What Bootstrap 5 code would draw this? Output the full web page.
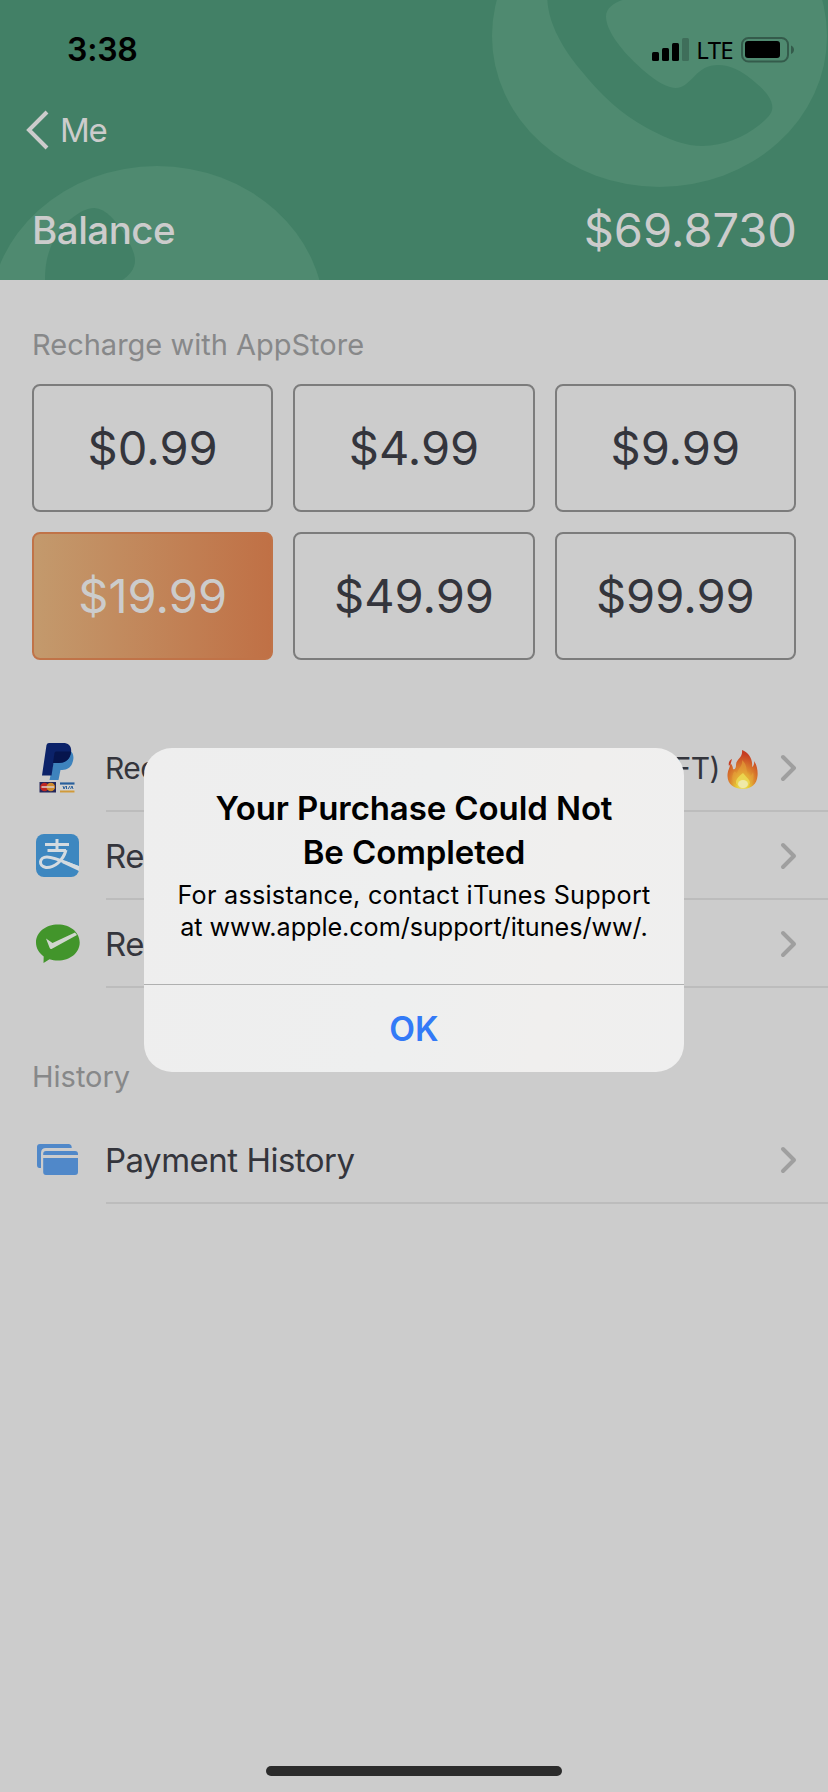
<!DOCTYPE html>
<html lang="en">
<head>
<meta charset="utf-8">
<meta name="viewport" content="width=device-width, initial-scale=1">
<title>Balance</title>
<link href="https://cdn.jsdelivr.net/npm/bootstrap@5.3.0/dist/css/bootstrap.min.css" rel="stylesheet">
<style>
  body { font-family: Inter, "Liberation Sans", sans-serif; background: #ccc; color: #34353c; line-height: 1; }
  .screen { width: 828px; height: 1792px; }
  .hero { height: 280px; background: #428066; color: #ccc; }
  .hero-art { z-index: 0; }
  .hero-row { z-index: 1; }
  .status { height: 100px; padding: 0 34px 0 67px; color: #000; }
  .clock { font-size: 32px; font-weight: 600; letter-spacing: -.2px; }
  .lte { font: 400 24px/1 "Noto Sans", sans-serif; letter-spacing: -.7px; margin: 0 8px 0 7px; }
  .back { height: 60px; padding-left: 26px; font-size: 33px; letter-spacing: -1.2px; }
  .funds { height: 100px; margin-top: 20px; padding: 0 31px 0 32px; }
  .funds-label { font-size: 38.5px; font-weight: 500; letter-spacing: -.5px; }
  .funds-sum { font-size: 47px; letter-spacing: 0; padding-bottom: 2px; }
  .section-label { height: 79px; padding-left: 32px; font-size: 29px; letter-spacing: 0; color: #878889; }
  .section-gap { margin-top: 25px; }
  .history-gap { margin-top: 49px; }
  .list-gap { margin-top: 64px; }
  .prices { display: grid; grid-template-columns: repeat(3, 1fr); gap: 20px; padding: 0 32px; }
  .price { --bs-btn-color: #34353c; --bs-btn-border-color: #7c7c7c; --bs-btn-border-width: 2px; --bs-btn-border-radius: 8px;
    --bs-btn-font-size: 47px; --bs-btn-line-height: 1; --bs-btn-padding-x: 0; --bs-btn-padding-y: 0; height: 128px; padding-bottom: 2px; }
  .price.chosen { color: #ccc; border-color: #c07348; background: linear-gradient(90deg, #c39a6d, #c07045) border-box; }
  .entry { height: 88px; padding-left: 32px; font-size: 33px; letter-spacing: -.5px; }
  .entry-main { border-bottom: 2px solid #bcbcbc; padding: 2px 31px 0 0; }
  .entry-main > span:first-child { margin-left: -1px; }
  .entry-tight { font-size: 30px; letter-spacing: -.5px; }
  .flame { margin: 3px 20px 0 7px; }
  .alert-box { left: 144px; top: 748px; width: 540px; height: 324px; border-radius: 28px; color: #000;
    background: linear-gradient(100deg, #eee 0%, #eeefef 50%, #f0efee 75%, #efefef 100%); padding-top: 38px; }
  .alert-title { font-size: 33px; font-weight: 600; line-height: 44px; letter-spacing: -.1px; }
  .alert-text { font-size: 25.2px; line-height: 32px; margin-top: 5px; letter-spacing: .25px; }
  .alert-url { letter-spacing: -.05px; }
  .alert-ok { height: 88px; border: 0; border-top: 1px solid #afb0b0; color: #337af7; font-size: 33.5px; font-weight: 600; background: none; letter-spacing: 0; padding: 2px 0 0; }
  .home-bar { width: 296px; height: 10px; bottom: 16px; left: 266px; background: #2b2b2b; }
</style>
</head>
<body>
<div class="screen position-relative overflow-hidden mx-auto">
  <header class="hero position-relative">
    <svg class="hero-art position-absolute top-0 start-0" width="828" height="280" viewBox="0 0 828 280">
      <g fill="#4f8a70"><ellipse cx="659.5" cy="36" rx="167.5" ry="151"/><ellipse cx="157" cy="317" rx="167.5" ry="151"/></g>
      <g fill="#428066" transform="scale(.33333)">
        <path transform="translate(1242 0)" d="M400 0C404 75 450 150 500 210C560 285 620 340 700 385C770 422 815 438 865 438C930 438 990 412 1035 376C1064 352 1075 340 1075 322C1075 292 1045 262 1000 228C970 207 945 195 913 195C880 195 862 208 840 230C820 250 805 264 785 264C750 264 695 222 650 175C615 138 577 90 576 50C576 25 598 10 625 0Z"/>
        <path d="M135 842C134 770 155 715 200 668C230 640 258 624 283 624C318 626 350 663 378 710C398 745 405 765 405 782C405 808 386 828 364 842Z"/>
      </g>
    </svg>
    <div class="hero-row status position-relative d-flex align-items-center justify-content-between">
      <span class="clock">3:38</span>
      <div class="d-flex align-items-center">
        <svg width="37" height="24" viewBox="0 0 37 24"><rect y="14" width="7" height="9" rx="1.5"/><rect x="10" y="10" width="7" height="13" rx="1.5"/><rect x="20" y="5" width="7" height="18" rx="1.5"/><rect x="30" width="7" height="23" rx="1.5" fill="#3f6e5a"/></svg>
        <span class="lte">LTE</span>
        <svg width="53" height="26" viewBox="0 0 53 26"><rect x="1" y="1" width="46" height="23.5" rx="6.5" fill="none" stroke="#345b4b" stroke-width="2"/><rect x="4" y="4" width="35" height="17" rx="3"/><path d="M50 8.500c4 1.500 4 7 0 8.500z" fill="#345b4b"/></svg>
      </div>
    </div>
    <div class="hero-row back position-relative d-flex align-items-center">
      <svg width="34" height="40" viewBox="0 0 34 40"><path d="M21 2L3 20L21 38" fill="none" stroke="#ccc" stroke-width="4"/></svg>
      <span>Me</span>
    </div>
    <div class="hero-row funds position-relative d-flex align-items-center justify-content-between">
      <span class="funds-label">Balance</span><span class="funds-sum">$69.8730</span>
    </div>
  </header>

  <main>
    <div class="section-label section-gap d-flex align-items-center">Recharge with AppStore</div>
    <div class="prices">
      <button class="btn price">$0.99</button><button class="btn price">$4.99</button><button class="btn price">$9.99</button>
      <button class="btn price chosen">$19.99</button><button class="btn price">$49.99</button><button class="btn price">$99.99</button>
    </div>

    <div class="list-gap">
      <div class="entry d-flex">
        <svg class="flex-shrink-0" width="74" height="88" viewBox="0 0 74 88">
          <path d="M24 27h14.500c4 3 3.500 9 1 14c-2.500 4-6 5-11 5l-2 10h-9z" fill="#3e83bd"/>
          <path d="M17 19h14c6 0 9 3.500 8 9.500c-1.500 7.500-6 10.500-13 10.500h-4.500l-2 12.500H10L14.500 21Q15 19 17 19Z" fill="#0b2269"/>
          <path d="M24 27.500h15c-.500 7.500-5 11.500-13 11.500h-5L22.500 29Q22.800 27.500 24 27.500Z" fill="#06154d"/>
          <rect x="7.500" y="58" width="16.500" height="10.500" fill="#24275b"/><circle cx="12.500" cy="63" r="4.300" fill="#be2722"/><circle cx="18.800" cy="63" r="4.300" fill="#cf8a2c"/><path d="M9.500 63h12.500" stroke="#dcc9c4" stroke-width="1.600"/>
          <rect x="28" y="58.500" width="14.500" height="10" fill="#d2d2d0"/><path d="M28 59.500h14.500" stroke="#285e9b" stroke-width="2.200"/><path d="M28 67.500h14.500" stroke="#d09a3b" stroke-width="2"/><path d="M31 62l1 3 1.500-3M34.500 62v3M38 62l-2 3M38.500 65l1.500-3 1 3" stroke="#285e9b" fill="none"/>
        </svg>
        <div class="entry-main entry-tight flex-grow-1 d-flex align-items-center">
          <span>Rec</span><span class="ms-auto">FT)</span>
          <svg class="flame" width="32" height="40" viewBox="0 0 32 40">
            <defs><radialGradient id="flame" cx=".5" cy=".88" r=".78"><stop offset="0" stop-color="#eee6a0"/><stop offset=".25" stop-color="#e8d034"/><stop offset=".5" stop-color="#dd8a30"/><stop offset="1" stop-color="#c63c22"/></radialGradient></defs>
            <path d="M15 0C22 3 26 9 25 17C27 16 27.500 13 27 11C30 15 31 21 30.500 26C30 34 24 39 16 39C7 39 .5 34 .5 26C.5 20 3 18 3.500 13C5 15 6 17 6 19C8 20 9 18 9 15C9 9 16 8 15 0Z" fill="url(#flame)"/>
            <path d="M15 10C16 16 11 18 10 24C9 22 8 21 7 22C3 28 6 36 16 37C25 36 28 30 26 22C25 25 23 27 21 26C19 22 21 15 15 10Z" fill="#e5a238" opacity=".6"/>
            <path d="M16 23C11 27 7 31 10 35C14 39 20 38 22 35C25 31 20 28 16 23Z" fill="#ecdf55" opacity=".8"/><ellipse cx="16" cy="34" rx="5" ry="4" fill="#f0edbd" opacity=".8"/>
            <path d="M2 16C1 12 3 10 5 9C4 12 4 14 2 16Z" fill="#c63c22"/>
          </svg>
          <svg width="18" height="30" viewBox="0 0 18 30"><path d="M4 4L15 15L4 26" fill="none" stroke="#9f9f9f" stroke-width="4" stroke-linecap="round" stroke-linejoin="round"/></svg>
        </div>
      </div>
      <div class="entry d-flex">
        <svg class="flex-shrink-0" width="74" height="88" viewBox="0 0 74 88">
          <rect x="4" y="22" width="43" height="43" rx="8" fill="#3d87c0"/>
          <g fill="none" stroke="#d4dbe0" stroke-width="2.600"><path d="M13 32.500h24M25 27v11M15.500 38.500h18.500" stroke-width="3"/><path d="M34 38C31 49 22 56 14 55.500C6 54 7 45 15 45C23 45 32 50 47 56" stroke-width="3"/></g>
          <path d="M33 49L47 54V59L30 51Z" fill="#d4dbe0"/>
        </svg>
        <div class="entry-main flex-grow-1 d-flex align-items-center"><span>Re</span>
          <svg class="ms-auto" width="18" height="30" viewBox="0 0 18 30"><path d="M4 4L15 15L4 26" fill="none" stroke="#9f9f9f" stroke-width="4" stroke-linecap="round" stroke-linejoin="round"/></svg></div>
      </div>
      <div class="entry d-flex">
        <svg class="flex-shrink-0" width="74" height="88" viewBox="0 0 74 88">
          <path d="M26 24.500C38 24.500 47.700 32 47.700 42.500S38 60.500 26 60.500C23 60.500 20 60 17.500 59.200L11.500 63L11.700 56.500C7 53 4 48 4 42.500C4 32 14 24.500 26 24.500Z" fill="#42952b"/>
          <path d="M14 38.500L20.500 43L43 32.500L45 35L19.500 49C18.500 49 18 48.500 17.500 47.500Z" fill="#d0d6ce"/>
        </svg>
        <div class="entry-main flex-grow-1 d-flex align-items-center"><span>Re</span>
          <svg class="ms-auto" width="18" height="30" viewBox="0 0 18 30"><path d="M4 4L15 15L4 26" fill="none" stroke="#9f9f9f" stroke-width="4" stroke-linecap="round" stroke-linejoin="round"/></svg></div>
      </div>
    </div>

    <div class="section-label history-gap d-flex align-items-center">History</div>
    <div class="entry d-flex">
      <svg class="flex-shrink-0" width="74" height="88" viewBox="0 0 74 88" fill="#5088c9">
        <path d="M8 28H36.500Q39.700 28 39.700 31.500V32H14Q9 32 9 37V52H7.500Q5 52 5 49V31Q5 28 8 28Z"/>
        <path d="M11.200 39V38Q11.200 35 14 35H43Q46 35 46 38V39ZM11.200 42H46V56Q46 59 43 59H14Q11.200 59 11.200 56Z"/>
      </svg>
      <div class="entry-main flex-grow-1 d-flex align-items-center"><span>Payment History</span>
        <svg class="ms-auto" width="18" height="30" viewBox="0 0 18 30"><path d="M4 4L15 15L4 26" fill="none" stroke="#9f9f9f" stroke-width="4" stroke-linecap="round" stroke-linejoin="round"/></svg></div>
    </div>
  </main>

  <div class="alert-box position-absolute d-flex flex-column text-center overflow-hidden" role="alertdialog">
    <div class="alert-title">Your Purchase Could Not<br>Be Completed</div>
    <div class="alert-text text-nowrap">For assistance, contact iTunes Support<br><span class="alert-url">at www.apple.com/support/itunes/ww/.</span></div>
    <button class="alert-ok w-100 mt-auto">OK</button>
  </div>
  <div class="home-bar position-absolute rounded-pill"></div>
</div>
<script src="https://cdn.jsdelivr.net/npm/bootstrap@5.3.0/dist/js/bootstrap.bundle.min.js"></script>
</body>
</html>
